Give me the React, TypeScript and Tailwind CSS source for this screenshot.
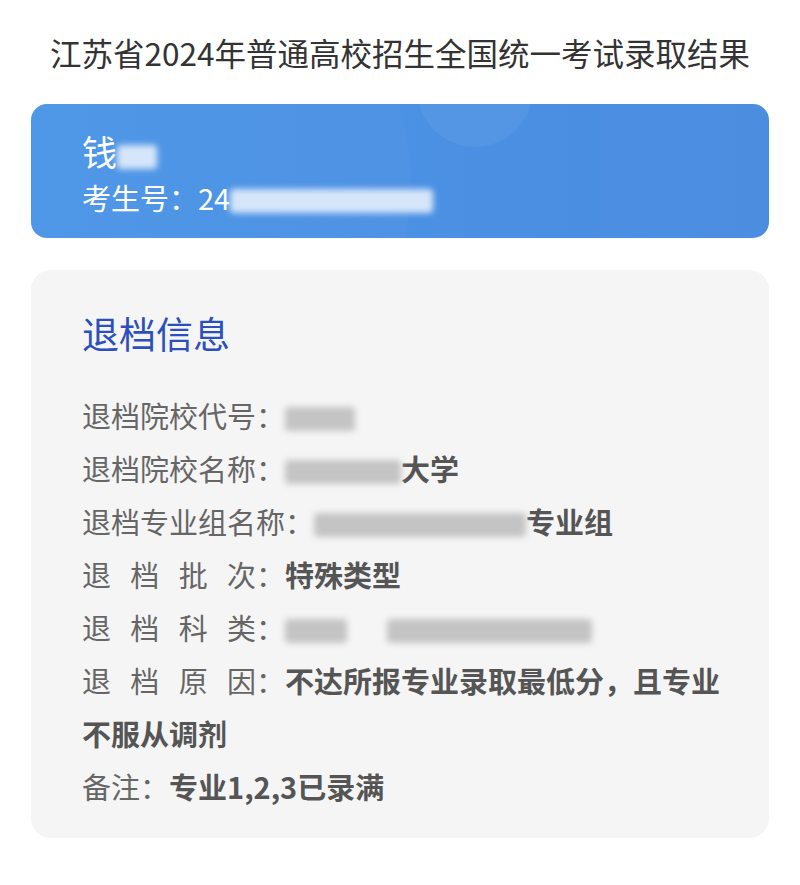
import React from "react";

const font = { fontFamily: '"Noto Sans CJK SC", "Noto Sans", sans-serif' };

function Blur({ w, tone = "gray" }: { w: number; tone?: "gray" | "white" }) {
  return (
    <span
      className={
        "inline-block h-[24px] align-[-3px] rounded-[4px] blur-[3px] " +
        (tone === "white" ? "bg-[#d6e6fa]" : "bg-[#c4c4c4]")
      }
      style={{ width: w }}
    />
  );
}

// four-character labels are spread to the width of six
function Spread({ text }: { text: string }) {
  return (
    <span>
      <span className="tracking-[0.6667em]">{text.slice(0, -1)}</span>
      {text.slice(-1)}：
    </span>
  );
}

export default function App() {
  return (
    <div className="w-[800px] h-[885px] bg-white pt-[32px]" style={font}>
      <h1 className="text-center text-[31.5px] leading-[40px] text-[#333333]">
        江苏省2024年普通高校招生全国统一考试录取结果
      </h1>

      {/* candidate card */}
      <div className="relative mx-[31px] mt-[32px] h-[134px] overflow-hidden rounded-[16px] bg-gradient-to-r from-[#4b95e7] to-[#4a8ce0] pl-[51px] pt-[24px] text-white">
        <div className="absolute left-[-180px] top-[-200px] h-[560px] w-[560px] rounded-full bg-white/[0.025]" />
        <div className="absolute left-[386px] top-[-73px] h-[116px] w-[116px] rounded-full bg-white/[0.06]" />
        <div className="absolute right-0 top-0 h-full w-[170px] bg-white/[0.015]" />
        <div className="relative text-[35px] leading-[46px]">
          钱<Blur w={40} tone="white" />
        </div>
        <div className="relative text-[29px] leading-[46px]">
          考生号：24<Blur w={203} tone="white" />
        </div>
      </div>

      {/* withdrawal info */}
      <div className="mx-[31px] mt-[32px] h-[568px] rounded-[20px] bg-[#f5f5f5] pl-[51px] pr-[46px] pt-[38px]">
        <h2 className="text-[37px] leading-[50px] text-[#2b4fbd]">退档信息</h2>
        <div className="mt-[31px] text-[29px] leading-[53px] text-[#666666]">
          <div>
            退档院校代号：<Blur w={70} />
          </div>
          <div>
            退档院校名称：<Blur w={116} />
            <b className="text-[#555555]">大学</b>
          </div>
          <div>
            退档专业组名称：<Blur w={212} />
            <b className="text-[#555555]">专业组</b>
          </div>
          <div>
            <Spread text="退档批次" />
            <b className="text-[#555555]">特殊类型</b>
          </div>
          <div>
            <Spread text="退档科类" />
            <Blur w={62} />
            <span className="inline-block w-[40px]" />
            <Blur w={205} />
          </div>
          <div className="whitespace-nowrap">
            <Spread text="退档原因" />
            <b className="text-[#555555]">不达所报专业录取最低分，且专业</b>
          </div>
          <div className="font-bold text-[#555555]">不服从调剂</div>
          <div>
            备注：<b className="text-[#555555]">专业1,2,3已录满</b>
          </div>
        </div>
      </div>
    </div>
  );
}
